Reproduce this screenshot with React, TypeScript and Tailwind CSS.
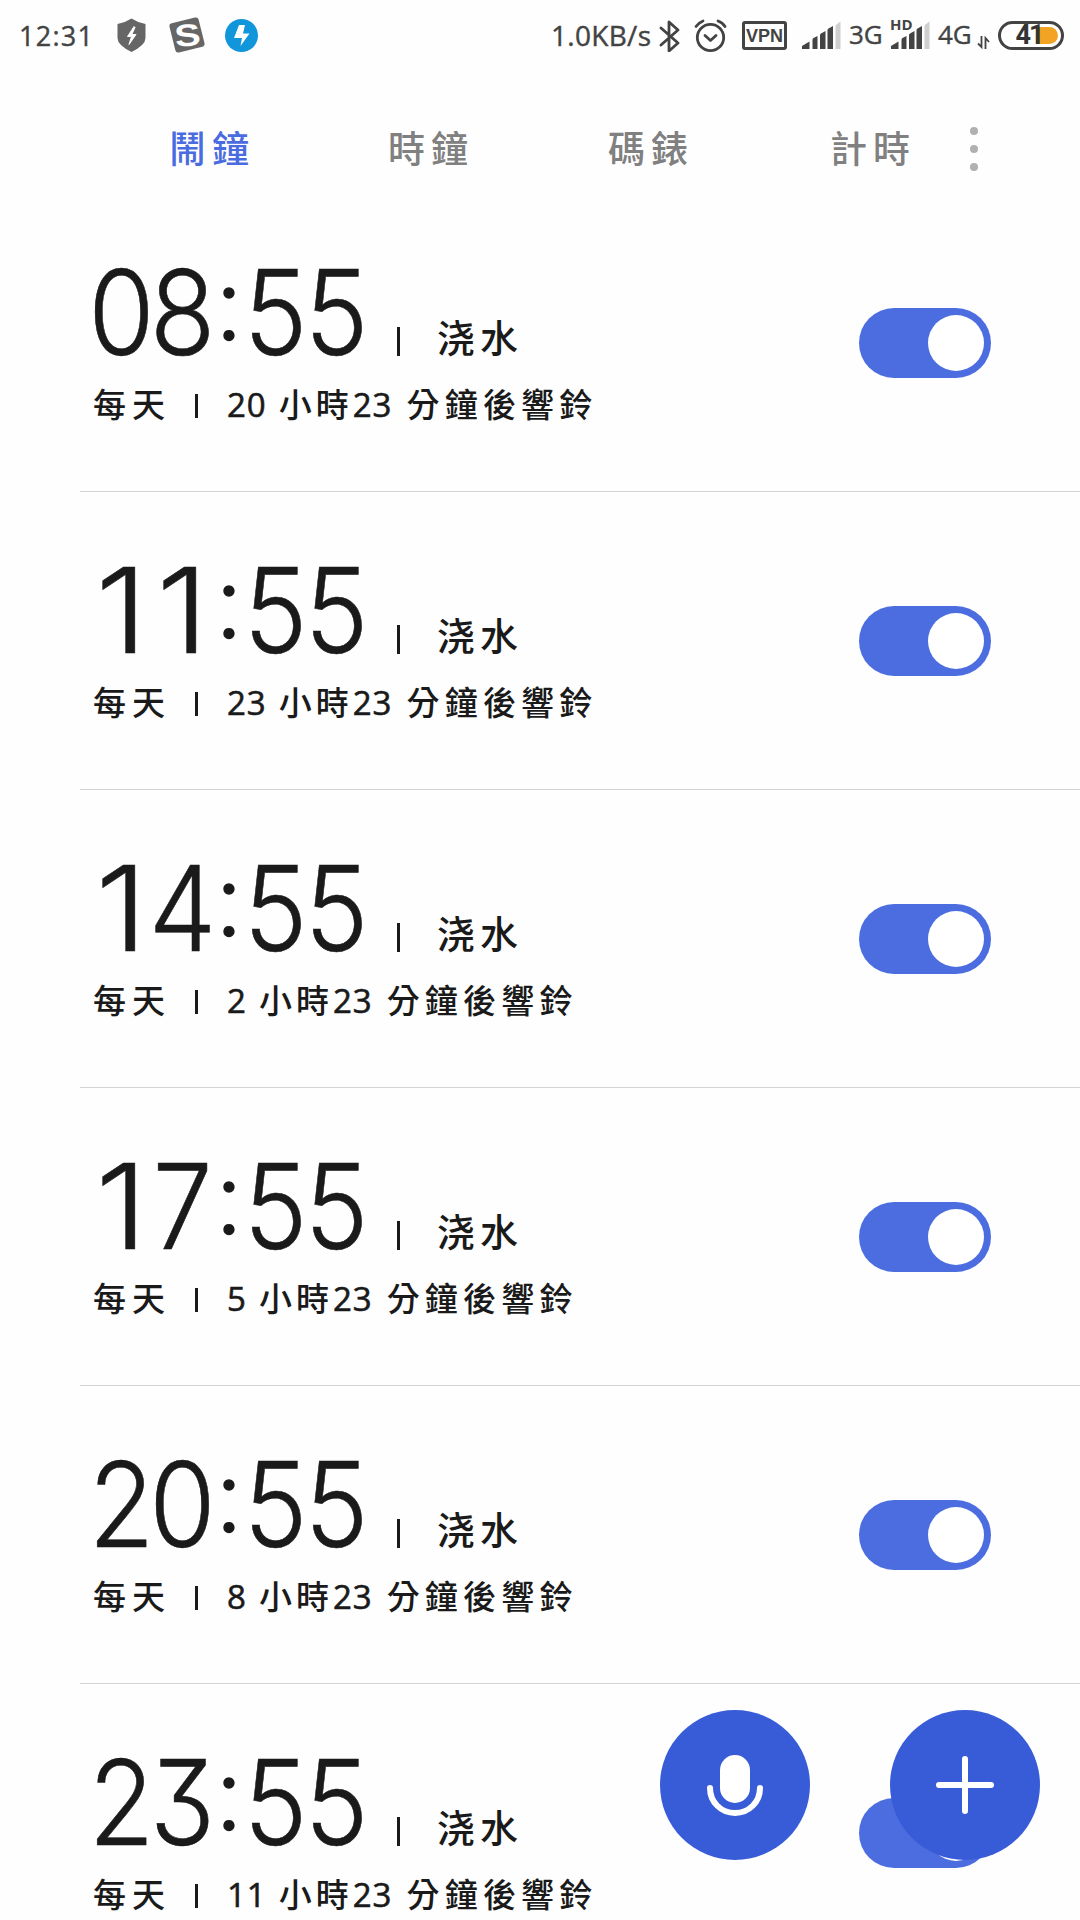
import { useState } from 'react';
import clsx from 'clsx';

interface Alarm {
  time: string;
  label: string;
  hours: number;
  minutes: number;
}

const tabs = [
  { name: '鬧鐘', className: 'ml-[169px]' },
  { name: '時鐘', className: 'ml-[137px]' },
  { name: '碼錶', className: 'ml-[138px]' },
  { name: '計時', className: 'ml-[140px]' },
];

const alarms: Alarm[] = [
  { time: '08:55', label: '浇水', hours: 20, minutes: 23 },
  { time: '11:55', label: '浇水', hours: 23, minutes: 23 },
  { time: '14:55', label: '浇水', hours: 2, minutes: 23 },
  { time: '17:55', label: '浇水', hours: 5, minutes: 23 },
  { time: '20:55', label: '浇水', hours: 8, minutes: 23 },
  { time: '23:55', label: '浇水', hours: 11, minutes: 23 },
];

function SignalBars({ className }: { className?: string }) {
  return (
    <svg viewBox="0 0 40 30" className={clsx('h-[30px] w-10 shrink-0', className)} fill="#434343">
      <path d="M1 28v-3l7.500-4.500V28z" />
      <path d="M11.500 28v-9q0-1.500 1-2l4-2v13z" />
      <path d="M19 28V14q0-1 1-1.500l4.500-2.500v18z" />
      <path d="M26.500 28V9q0-1 1-1.500l4.500-2.500v23z" />
      <path d="M34.500 28V5q0-1 1-1.500l4-3V28z" fill="#cfcfcf" />
    </svg>
  );
}

function StatusBar() {
  return (
    <header className="flex h-[72px] items-start pt-[18px] font-['Open_Sans','Noto_Sans',sans-serif] text-[#434343]">
      <span className="ml-[19px] mt-[4px] w-[76px] whitespace-nowrap text-[27px] leading-[27px] tracking-[1.300px] [-webkit-text-stroke:0.4px]">
        12:31
      </span>
      <svg viewBox="0 0 30 34" className="ml-[22px] h-[34px] w-[30px] shrink-0">
        <path d="M14.500.500q7 4.500 14 5.500v14q0 7-14 14q-14-7-14-14V6q7-1 14-5.500z" fill="#666" />
        <path d="M17 8.500l-6.500 10h4l-2.500 8 7-10h-4.200l3.200-7z" fill="#fff" stroke="#fff" strokeWidth="1" />
      </svg>
      <span className="ml-[25px] mt-[2px] flex h-[30px] w-[30px] shrink-0 -rotate-[14deg] items-center justify-center rounded-[3px] bg-[#666]">
        <span className="rotate-[8deg] scale-x-[1.250] font-['Liberation_Sans',sans-serif] text-[31px] font-bold leading-none text-white">
          S
        </span>
      </span>
      <svg viewBox="0 0 34 34" className="ml-[23px] h-[34px] w-[34px] shrink-0">
        <circle cx="16.500" cy="17.500" r="16.500" fill="#1296db" />
        <path d="M14 7h6l-2 8.500h6.500L15.500 28l1.500-8H9z" fill="#fff" />
      </svg>

      <span className="ml-[292px] mt-[3px] w-[106px] whitespace-nowrap text-[28px] leading-[28px] tracking-[0.300px] [-webkit-text-stroke:0.4px]">
        1.0KB/s
      </span>
      <svg viewBox="0 0 22 34" className="ml-[2px] h-[34px] w-[22px] shrink-0" fill="none" stroke="#434343" strokeWidth="2.800">
        <path d="M2 10l17 15-9 8V4l9 8L2 27" strokeLinejoin="round" strokeLinecap="round" />
      </svg>
      <svg viewBox="0 0 34 36" className="ml-[13px] h-9 w-[34px] shrink-0" fill="none" stroke="#434343" strokeWidth="2.800" strokeLinecap="round">
        <circle cx="16.500" cy="19.500" r="13.200" />
        <path d="M11 17.500l5.500 5 5.500-5" strokeLinejoin="round" />
        <path d="M2 8.500q3-4 7-5.500M24 3q4.500 1.500 7 5.500" />
      </svg>
      <span className="ml-[14px] mt-[3px] flex h-[29px] w-[45px] shrink-0 items-center justify-center rounded-[3px] border-[3px] border-[#434343] font-['Liberation_Sans',sans-serif] text-[18px] font-bold leading-none">
        VPN
      </span>
      <SignalBars className="ml-[14px] mt-[3px]" />
      <span className="ml-[8px] mt-[3px] w-[34px] whitespace-nowrap text-[26px] leading-[26px] [-webkit-text-stroke:0.4px]">
        3G
      </span>
      <span className="relative ml-[7px] mt-[3px] shrink-0">
        <SignalBars />
        <span className="absolute left-0 top-[-3px] font-['Open_Sans',sans-serif] text-[15px] font-bold leading-[13px]">
          HD
        </span>
      </span>
      <span className="ml-[8px] mt-[3px] w-9 whitespace-nowrap text-[26px] leading-[26px] [-webkit-text-stroke:0.4px]">
        4G
      </span>
      <svg viewBox="0 0 14 14" className="ml-[3px] mt-[18px] h-[14px] w-[14px] shrink-0" fill="none" stroke="#434343" strokeWidth="1.800">
        <path d="M4.500 0v11L1 7.500M8.500 13V2l3.500 4" />
      </svg>
      <span className="relative ml-[7px] mt-[3px] flex h-[29px] w-[66px] shrink-0 items-center justify-center rounded-full border-[3px] border-[#434343]">
        <span className="absolute right-[3px] top-[3px] h-[17px] w-[22px] rounded-r-full bg-[#f2a324]" />
        <span className="relative right-[2px] font-['Roboto',sans-serif] text-[27px] font-bold leading-none tracking-[-2px] text-[#333]">
          41
        </span>
      </span>
    </header>
  );
}

function TabBar({ active, onSelect }: { active: number; onSelect: (index: number) => void }) {
  return (
    <nav className="flex h-[122px] items-start pt-[54px]">
      {tabs.map((tab, index) => (
        <button
          key={tab.name}
          onClick={() => onSelect(index)}
          className={clsx(
            'w-[82px] whitespace-nowrap text-left text-[37px] font-medium leading-[42px] tracking-[6px]',
            index === active ? 'text-[#4a6ce0]' : 'text-[#808080]',
            tab.className
          )}
        >
          {tab.name}
        </button>
      ))}
      <button className="ml-[58px] mt-px flex h-11 w-2 flex-col justify-between" aria-label="更多">
        <span className="size-2 rounded-full bg-[#b0b0b0]" />
        <span className="size-2 rounded-full bg-[#b0b0b0]" />
        <span className="size-2 rounded-full bg-[#b0b0b0]" />
      </button>
    </nav>
  );
}

function Toggle() {
  const [on, setOn] = useState(true);

  return (
    <button
      role="switch"
      aria-checked={on}
      onClick={() => setOn(!on)}
      className={clsx(
        'mt-[114px] flex h-[70px] w-[132px] shrink-0 items-center rounded-full px-[7px]',
        on ? 'justify-end bg-[#4b6de0]' : 'justify-start bg-[#d0d0d0]'
      )}
    >
      <span className="size-14 rounded-full bg-white" />
    </button>
  );
}

function TimeChar({ char }: { char: string }) {
  if (char === ':') {
    return (
      <span className="flex w-[32px] shrink-0 justify-center font-['Lato',sans-serif] text-[106px] font-light leading-[91px] [-webkit-text-stroke:1.5px]">
        {char}
      </span>
    );
  }

  return (
    <span
      className={clsx(
        'flex w-[61px] shrink-0 justify-center [-webkit-text-stroke:0.6px]',
        char === '1' ? 'scale-x-[1.120]' : 'scale-x-[0.910]'
      )}
    >
      {char}
    </span>
  );
}

function AlarmRow({ alarm }: { alarm: Alarm }) {
  return (
    <li className="ml-20 flex h-[298px] items-start justify-between border-b border-[#d3d3d3] pr-[89px] text-[#1a1a1a]">
      <div className="pt-[60px]">
        <div className="flex h-[120px] items-start">
          {/* fixed cells keep the digits aligned from row to row */}
          <div className="ml-[11px] flex w-[277px] font-['Inter',sans-serif] text-[118px] font-light leading-[117px] [font-feature-settings:'cv09']">
            {alarm.time.split('').map((char, index) => (
              <TimeChar key={index} char={char} />
            ))}
          </div>
          <span className="ml-[29px] mt-[73px] h-[29px] w-[3px] bg-[#1a1a1a]" />
          <span className="ml-[37px] mt-[59px] whitespace-nowrap text-[38px] font-medium leading-[46px] tracking-[5px]">
            {alarm.label}
          </span>
        </div>
        <div className="ml-[13px] mt-[6px] flex h-[46px] items-center whitespace-nowrap text-[33px] font-medium leading-[46px] tracking-[6px]">
          <span className="w-[102px]">每天</span>
          <span className="mr-[29px] mt-[5px] h-6 w-[3px] bg-[#1a1a1a]" />
          <span className="pt-[3px] font-['Open_Sans',sans-serif] tracking-[1px] [-webkit-text-stroke:0.6px]">{alarm.hours}</span>
          <span className="ml-[12px] tracking-[4px]">小時</span>
          <span className="pt-[3px] font-['Open_Sans',sans-serif] tracking-[1px] [-webkit-text-stroke:0.6px]">{alarm.minutes}</span>
          <span className="ml-[14px] tracking-[5.200px]">分鐘後響鈴</span>
        </div>
      </div>
      <Toggle />
    </li>
  );
}

function FloatingActions() {
  return (
    <div className="absolute left-[660px] top-[1710px] flex gap-20">
      <button className="size-[150px] rounded-full bg-[#385cd7]" aria-label="語音">
        <svg viewBox="0 0 150 150" className="size-full" fill="none" stroke="#fff" strokeWidth="6" strokeLinecap="round">
          <rect x="60" y="45" width="30" height="48" rx="15" fill="#fff" stroke="none" />
          <path d="M50 78c0 14 11 25 25 25s25-11 25-25" />
        </svg>
      </button>
      <button className="size-[150px] rounded-full bg-[#385cd7]" aria-label="新增">
        <svg viewBox="0 0 150 150" className="size-full" fill="none" stroke="#fff" strokeWidth="6" strokeLinecap="round">
          <path d="M49 75h52M75 49v52" />
        </svg>
      </button>
    </div>
  );
}

export default function App() {
  const [activeTab, setActiveTab] = useState(0);

  return (
    <div className="relative h-[1920px] w-[1080px] overflow-hidden bg-[#fefefe] font-['Noto_Sans_CJK_TC','Noto_Sans_CJK_SC',sans-serif]">
      <StatusBar />
      <TabBar active={activeTab} onSelect={setActiveTab} />
      <ul>
        {alarms.map((alarm) => (
          <AlarmRow key={alarm.time} alarm={alarm} />
        ))}
      </ul>
      <FloatingActions />
    </div>
  );
}
